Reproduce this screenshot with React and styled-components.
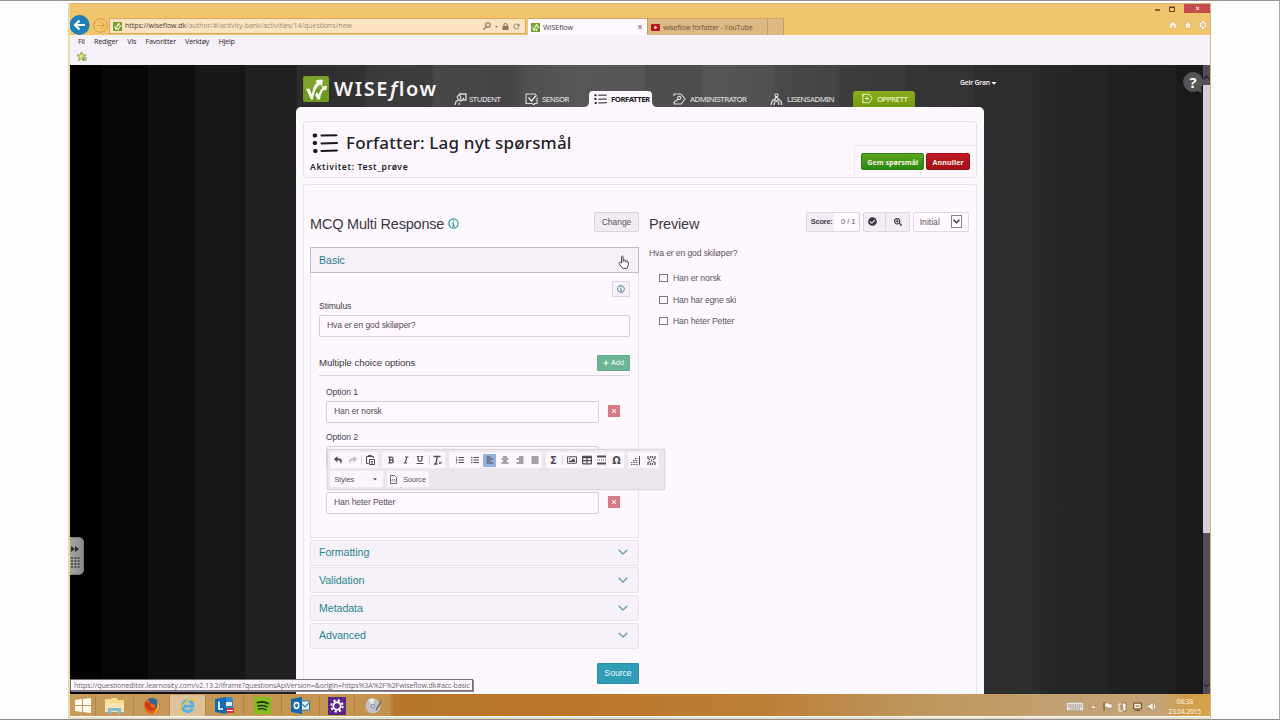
import React from 'react'
import styled, { createGlobalStyle, css } from 'styled-components'
import {
  FaAlignCenter, FaAlignJustify, FaAlignLeft, FaAlignRight, FaBold, FaCaretDown, FaCheckCircle,
  FaItalic, FaListOl, FaListUl, FaLock, FaPlus, FaRegImage, FaReply, FaSearchPlus,
  FaShare, FaTable, FaTimes, FaUnderline
} from 'react-icons/fa'
import { MdHome, MdStar, MdSettings, MdRefresh } from 'react-icons/md'

const Global = createGlobalStyle`
  *, *::before { box-sizing: border-box; }
  body { margin: 0; background: #fff; overflow: hidden; }
  svg { display: block; flex: none; }
`
const ui = '"Open Sans", "Noto Sans", sans-serif'
const arial = '"Liberation Sans", Arial, sans-serif'
const brand = '"Noto Sans", "Open Sans", sans-serif'

const Screen = styled.div`
  width: 1280px;
  height: 720px;
  padding: 2px 68px 0;
  border-top: 1px solid #99928f;
  border-bottom: 1px solid #8d8a8a;
  border-right: 1px solid #a8a8a8;
  background: #fefefe;
`
const Window = styled.div`
  width: 1143px;
  height: 716px;
  border: 1px solid #d5b67e;
  border-left: 2px solid #ead9a8;
  border-bottom: 2px solid #eadfc9;
  display: flex;
  flex-direction: column;
  font-family: ${ui};
  overflow: hidden;
`

/* browser chrome */
const TitleBar = styled.div`
  height: 31px;
  flex: none;
  background: #f1c46e;
  display: flex;
  align-items: flex-end;
`
const BackCell = styled.div`
  width: 39px;
  height: 20px;
  display: flex;
  align-items: center;
  gap: 3px;
`
const Address = styled.div`
  width: 417px;
  height: 16px;
  margin-bottom: 1px;
  padding: 0 4px 0 3px;
  background: #fce3c2;
  border: 1px solid #dba95c;
  display: flex;
  align-items: center;
  gap: 3px;
  color: #8d7460;
`
const Url = styled.div`
  flex: 1;
  font-size: 7px;
  line-height: 12px;
  letter-spacing: -0.04px;
  color: #a08c78;
  white-space: nowrap;
  b { color: #4c3c35; font-weight: 500; }
`
const Tab = styled.div`
  height: 17px;
  width: ${p => p.$w}px;
  margin-left: ${p => p.$ml || 0}px;
  padding: 0 4px 0 3px;
  border-right: 1px solid #c39c63;
  border-top: 1px solid #d4aa66;
  background: ${p => (p.$active ? '#fff9ff' : '#dcb982')};
  display: flex;
  align-items: center;
  gap: 3px;
  font-size: 7.2px;
  letter-spacing: ${p => (p.$active ? -0.1 : -0.18)}px;
  color: ${p => (p.$active ? '#453944' : '#6c5338')};
  white-space: nowrap;
  span { flex: 1; }
`
const WindowTools = styled.div`
  flex: 1;
  height: 31px;
  display: flex;
  flex-direction: column;
  align-items: flex-end;
`
const Controls = styled.div`
  display: flex;
  align-items: center;
  height: 9px;
  gap: 9px;
`
const Close = styled.div`
  width: 26px;
  height: 9px;
  display: flex;
  align-items: center;
  justify-content: center;
  background: #c64b4c;
  color: #fbe3dc;
`
const Shortcuts = styled.div`
  display: flex;
  gap: 5px;
  padding: 7px 2px 0 0;
  color: #fff4e0;
  svg { filter: drop-shadow(0 0 0.6px #755427); }
`
const MenuBar = styled.div`
  height: 15px;
  flex: none;
  padding: 0 9px 4px 8px;
  background: #f6f0f9;
  display: flex;
  align-items: center;
  gap: 9.2px;
  font-size: 7.2px;
  letter-spacing: -0.2px;
  color: #30262f;
`
const Favourites = styled.div`
  height: 15px;
  flex: none;
  padding: 1px 6px;
  background: #f6f0f9;
  color: #8fad42;
`

/* page */
const Viewport = styled.div`
  position: relative;
  height: 629px;
  flex: none;
  display: flex;
  background: linear-gradient(90deg,
    #010101 31px, #070707 31px, #070707 78px, #0f0f0f 78px, #0f0f0f 125px, #171717 125px,
    #171717 175px, #202020 175px, #202020 226px, #2e2d2e 228px, #323132 295px, #3b3a3b 296px,
    #3e3d3e 362px, #484748 364px, #464546 440px, #515051 457px, #585758 510px, #565556 575px, #4f4e4f 576px,
    #4f4e4f 632px, #575657 634px, #525152 704px, #4a494a 706px, #454445 769px, #3d3c3d 770px, #3b3a3b 835px,
    #363536 836px, #333233 904px, #2e2d2e 905px, #2d2c2d 970px, #272627 971px, #262526 1037px,
    #222122 1038px, #212021 1105px, #1b1a1b 1106px);
`
const Site = styled.div`
  width: 688px;
  margin-left: 226px;
  display: flex;
  flex-direction: column;
`
const SiteHeader = styled.header`
  height: 42px;
  flex: none;
  display: flex;
  align-items: flex-end;
  padding-left: 7px;
`
const Logo = styled.div`
  width: 151px;
  height: 31px;
  display: flex;
  align-items: flex-start;
  gap: 5px;
  font-family: ${brand};
  font-size: 20px;
  font-weight: 600;
  line-height: 26px;
  letter-spacing: 1.6px;
  color: #f7f3f8;
  i { margin-left: 1px; }
`
const Nav = styled.nav`
  display: grid;
  grid-template-columns: 71px 60px 88px 97px 83px 62px;
`
const NavItem = styled.div`
  height: 16px;
  padding-bottom: 1px;
  display: flex;
  align-items: center;
  gap: ${p => p.$gap || 4}px;
  font-family: ${brand};
  font-size: 7.8px;
  font-weight: 500;
  letter-spacing: -0.5px;
  color: #dcdadc;
  white-space: nowrap;
  ${p => p.$active && css`
    width: 71px;
    padding-left: 9px;
    font-weight: 700;
    color: #1d171f;
    background: #fdf7fe;
    clip-path: path('M0 16 Q4 15 4 11 V4 Q4 0 8 0 H63 Q67 0 67 4 V11 Q67 15 71 16 Z');
  `}
  ${p => p.$create && css`
    padding-left: 9px;
    border-radius: 3px 3px 0 0;
    color: #eaf2cf;
    background: linear-gradient(#8bad1c, #739a0c);
  `}
`
const User = styled.div`
  position: absolute;
  top: 12px;
  left: 890px;
  display: flex;
  align-items: center;
  font-family: ${brand};
  font-size: 6.8px;
  font-weight: 600;
  line-height: 12px;
  letter-spacing: -0.2px;
  color: #f2eef3;
`
const Help = styled.div`
  position: absolute;
  top: 6px;
  right: 6px;
`
const Handle = styled.div`
  position: absolute;
  left: 0;
  top: 472px;
  width: 14px;
  height: 38px;
  border-radius: 0 5px 5px 0;
  background: linear-gradient(90deg, #a6a6a6, #8c8c8c);
  border: 1px solid #777;
  border-left: 0;
`
const Scrollbar = styled.div`
  width: 7px;
  margin-left: auto;
  padding: 11px 0 7px;
  background: #554b5b;
  display: flex;
  flex-direction: column;
`
const Up = styled.span`
  transform: rotate(180deg);
  height: 4px;
`
const Thumb = styled.div`
  height: 448px;
  margin: 5px 0 auto;
  background: #d6cdda;
`
const Page = styled.main`
  flex: 1;
  padding: 14px 7px 0;
  display: flex;
  flex-direction: column;
  gap: 6px;
  border-radius: 5px 5px 0 0;
  background: #fdf8fe;
  overflow: hidden;
`
const Heading = styled.section`
  height: 57px;
  flex: none;
  border: 1px solid #e8e1eb;
  border-radius: 3px;
  background: #fdf7fd;
  display: flex;
  justify-content: space-between;
  align-items: flex-end;
`
const Titles = styled.div`
  align-self: flex-start;
  padding: 9px 0 0 6px;
  font-family: ${brand};
  color: #241e28;
`
const PageTitle = styled.h1`
  margin: 0;
  display: flex;
  align-items: center;
  gap: 6px;
  font-size: 17px;
  font-weight: 500;
  line-height: 24px;
  letter-spacing: 0.18px;
`
const Activity = styled.div`
  font-size: 8.6px;
  font-weight: 600;
  line-height: 14px;
  letter-spacing: 0.64px;
  margin-top: 5px;
`
const Actions = styled.div`
  width: 122px;
  height: 32px;
  padding: 7px 6px;
  display: flex;
  gap: 2px;
  border-top: 1px solid #ebe4ec;
  border-left: 1px solid #f0e9f1;
`
const ActionButton = styled.button`
  height: 17px;
  width: ${p => p.$w}px;
  padding: 0;
  border: 1px solid ${p => (p.$danger ? '#97111a' : '#2f7d12')};
  border-radius: 2px;
  background: ${p => (p.$danger ? 'linear-gradient(#bd1a25, #a90e17)' : 'linear-gradient(#5da51c, #298a10)')};
  color: #f6efe2;
  font: 700 7.1px/12px ${brand};
  letter-spacing: ${p => (p.$danger ? 0.1 : 0.02)}px;
  white-space: nowrap;
`
const Editor = styled.section`
  flex: 1;
  min-height: 0;
  padding: 26px 7px 0 6px;
  border: 1px solid #ebe4ee;
  border-bottom: 0;
  border-radius: 3px 3px 0 0;
  background: #fdf7fe;
  display: grid;
  grid-template-columns: 329px 320px;
  gap: 10px;
  font-family: ${arial};
  color: #463f49;
`
const Column = styled.div`
  position: relative;
`
const Row = styled.div`
  display: flex;
  align-items: center;
  justify-content: space-between;
  height: ${p => p.$h}px;
`
const SectionTitle = styled.h2`
  margin: 0;
  display: flex;
  align-items: center;
  gap: 4px;
  font-size: 14.5px;
  font-weight: 400;
  letter-spacing: -0.2px;
  line-height: 24px;
  padding-top: 4px;
  color: #3f3842;
`
const GreyButton = styled.button`
  height: 20px;
  width: ${p => p.$w}px;
  padding: 0;
  border: 1px solid #dbd4dd;
  border-radius: 2px;
  background: #f1ebf3;
  color: #5c5560;
  font: 8.6px/16px ${arial};
  letter-spacing: -0.1px;
  display: flex;
  align-items: center;
  justify-content: center;
`
const Bar = styled.div`
  height: 26px;
  margin-top: ${p => (p.$open ? 15 : 1.7)}px;
  padding: 0 10px 1px 8px;
  display: flex;
  align-items: center;
  justify-content: space-between;
  border: 1px solid ${p => (p.$open ? '#c3bcc8' : '#e9e2ed')};
  border-radius: ${p => (p.$open ? 0 : 2)}px;
  background: #f6f0f9;
  color: ${p => (p.$open ? '#2a7890' : '#27868f')};
  font-size: 10.6px;
  letter-spacing: -0.04px;
`
const Body = styled.div`
  height: 265px;
  padding: 8px 8px 0;
  border: 1px solid #e9e2ed;
  border-top: 0;
`
const SmallInfo = styled.div`
  width: 18px;
  height: 16px;
  margin: 0 0 2px auto;
  display: flex;
  align-items: center;
  justify-content: center;
  border: 1px solid #dbd5df;
  border-radius: 1px;
  background: #f6f0f8;
`
const Label = styled.div`
  font-size: 8.6px;
  line-height: 14px;
  letter-spacing: -0.08px;
  color: #463f49;
  visibility: ${p => (p.$covered ? 'hidden' : 'visible')};
`
const Input = styled.div`
  flex: 1;
  height: 22px;
  padding: 0 7px;
  border: 1px solid #d5cfda;
  border-radius: 2px;
  background: #fff9ff;
  font-size: 8.6px;
  line-height: 18px;
  letter-spacing: -0.12px;
  color: #554d58;
`
const OptionsHead = styled.div`
  height: 24px;
  margin: 14px 0 9px;
  padding-top: 3px;
  display: flex;
  justify-content: space-between;
  border-bottom: 1px solid #ddd6e0;
  font-size: 9.6px;
  line-height: 16px;
  letter-spacing: -0.03px;
  color: #3c3540;
`
const Add = styled.button`
  width: 33px;
  height: 16px;
  padding: 0;
  border: 1px solid #62ab8d;
  border-radius: 1px;
  background: #6bb596;
  color: #f1fff9;
  font: 7.4px/12px ${arial};
  display: flex;
  align-items: center;
  justify-content: center;
  gap: 2px;
`
const Option = styled.div`
  height: 45.3px;
  padding: 0 9px 0 7px;
`
const OptionLine = styled.div`
  display: flex;
  align-items: center;
  gap: 9px;
  margin-top: 2px;
  padding-right: 1px;
`
const Remove = styled.div`
  width: 12px;
  height: 12px;
  margin-top: -2px;
  display: flex;
  align-items: center;
  justify-content: center;
  background: #d67c87;
  color: #fff3f5;
`
const SourceButton = styled.button`
  display: block;
  width: 42px;
  height: 21px;
  margin: 14px 0 0 auto;
  padding: 0;
  border: 1px solid #2a8ea6;
  border-radius: 1px;
  background: #2f9db5;
  color: #ecfbff;
  font: 8.8px/17px ${arial};
  letter-spacing: -0.1px;
`

/* preview */
const Tools = styled.div`
  display: flex;
  gap: 3px;
`
const Group = styled.div`
  height: 20px;
  width: ${p => p.$w}px;
  padding-right: ${p => p.$pr || 0}px;
  display: flex;
  align-items: center;
  justify-content: space-around;
  border: 1px solid #ded7e1;
  border-radius: 2px;
  background: ${p => (p.$plain ? '#fff9ff' : '#f3edf6')};
  font-size: ${p => p.$size || 7.6}px;
  color: #5c5560;
  b { letter-spacing: -0.3px; padding-left: 3px; color: #443d47; }
  svg { color: #3c3540; }
`
const Points = styled.span`
  align-self: stretch;
  padding: 0 3px 0 7px;
  line-height: 18px;
  letter-spacing: -0.1px;
  background: #fff9ff;
`
const Rule = styled.span`
  width: 1px;
  height: ${p => p.$h || 18}px;
  background: #ddd6e0;
`
const DropArrow = styled.span`
  width: 11px;
  height: 13px;
  display: flex;
  align-items: center;
  justify-content: center;
  border: 1px solid #8a838d;
`
const Question = styled.div`
  margin: 14px 0 7px;
  font-size: 8.6px;
  line-height: 14px;
  letter-spacing: -0.12px;
  color: #5c5560;
`
const Choice = styled.div`
  height: 21.7px;
  padding-left: 10px;
  display: flex;
  align-items: center;
  gap: 5px;
  font-size: 8.6px;
  letter-spacing: -0.12px;
  color: #5c5560;
  &::before {
    content: '';
    width: 9px;
    height: 8px;
    border: 1px solid #7d7680;
  }
`

/* floating rich text toolbar */
const Floating = styled.div`
  position: absolute;
  left: 17px;
  top: 238px;
  width: 338px;
  height: 41px;
  padding: 2px 2px;
  border: 1px solid #ddd6e0;
  background: #ece6ee;
  box-shadow: 0 0 1px #cfc8d2;
`
const ToolRow = styled.div`
  display: flex;
  gap: 4px;
  height: 16px;
  margin-bottom: 3px;
`
const ToolGroup = styled.div`
  width: ${p => p.$w}px;
  padding-left: ${p => p.$pl || 0}px;
  display: flex;
  align-items: center;
  justify-content: space-around;
  border-radius: 1px;
  background: #fbf5fc;
  font-size: 7.2px;
  color: #544d57;
`
const Tool = styled.span`
  width: 13px;
  height: 13px;
  display: flex;
  align-items: center;
  justify-content: center;
  font: 700 10px/13px "DejaVu Sans", sans-serif;
  opacity: ${p => (p.$off ? 0.35 : 1)};
  background: ${p => (p.$on ? '#8fb2de' : 'transparent')};
`
const Pointer = styled.div`
  position: absolute;
  left: 308px;
  top: 44px;
`
const Status = styled.div`
  position: absolute;
  left: 0;
  bottom: 3px;
  height: 12px;
  width: 403px;
  padding-left: 3px;
  border: 1px solid #77707a;
  box-shadow: 1px 1px 0 #8b8490;
  background: #fdf8fe;
  font-size: 7.1px;
  line-height: 10px;
  letter-spacing: -0.11px;
  color: #6c646e;
  white-space: nowrap;
`

/* taskbar */
const Taskbar = styled.div`
  height: 22px;
  flex: none;
  display: flex;
  align-items: center;
  justify-content: space-between;
  background: linear-gradient(90deg, #c69b5c 0, #c2934d 320px, #b6772a 322px, #bb762a 500px, #bd7f37 700px, #bf965d 850px, #c2a171 1000px, #c4a376 1090px, #cf9e4a 1115px, #d6a34b);
`
const Apps = styled.div`
  height: 22px;
  padding-top: 1px;
  display: grid;
  grid-template-columns: 26px 38px 36px 36px 38px 38px 38px 35px 38px;
`
const AppCell = styled.div`
  display: flex;
  align-items: center;
  justify-content: center;
  border-right: 1px solid #b5853f;
  background: ${p => (p.$current ? '#dfc29a' : 'transparent')};
`
const Tray = styled.div`
  display: flex;
  align-items: center;
  gap: 6px;
  padding: 3px 9px 0 0;
  color: #fff8ee;
`
const Clock = styled.div`
  margin-left: 6px;
  font-size: 6.8px;
  line-height: 10px;
  letter-spacing: -0.2px;
  text-align: center;
`

const Leaf = ({ size }) => (
  <svg width={size} height={size} viewBox="0 0 26 26">
    <rect width="26" height="26" rx="2" fill="#6f9a22" />
    <rect x="1" y="1" width="24" height="12" fill="#84aa35" opacity=".6" />
    <path d="M3 13l3.500-.5 2.500 6C10 11 12 8 14 6.500l-2-1.500q5-2.500 8-1l-1 6-2-1.500c-4 3-6 8-7 15H8z" fill="#f8fcef" />
    <path d="M12 19l2-3 1.500 2.500C17 15 18 13 19.500 12l-1-1.200q3-1.300 5.500-.6l-1 4.300-1.500-1c-3 2-4 6-4.500 10h-2.500z" fill="#f8fcef" />
  </svg>
)
const Back = () => (
  <svg width="20" height="20" viewBox="0 0 20 20">
    <circle cx="9.6" cy="10" r="10" fill="#1f7fb8" />
    <path d="M15 10H5m4.5-4.5L5 10l4.500 4.500" stroke="#fff" strokeWidth="2.200" fill="none" />
  </svg>
)
const Forward = () => (
  <svg width="15" height="15" viewBox="0 0 15 15" fill="none" stroke="#dd9c3c">
    <circle cx="7.500" cy="7.500" r="6.800" />
    <path d="M3.500 7.500h8M8 4l3.500 3.500L8 11" strokeWidth=".9" />
  </svg>
)
const Line = ({ children, w = 13, h = 12, box = '0 0 13 12', sw = 1.1 }) => (
  <svg width={w} height={h} viewBox={box} fill="none" stroke="currentColor" strokeWidth={sw}>{children}</svg>
)
const Lens = () => (
  <Line w={8} h={8} box="0 0 8 8"><circle cx="5" cy="3" r="2.300" /><path d="M3.200 4.800L.5 7.500" strokeWidth="1.300" /></Line>
)
const StudentIcon = () => (
  <Line>
    <path d="M5.500 2V1H12v6H7.500" strokeWidth="1.300" /><circle cx="5" cy="4.500" r="1.900" />
    <path d="M1 12l1-3.500 3-1.500 2 1 3-3M5 12l.5-2.500" strokeWidth="1.300" />
  </Line>
)
const SensorIcon = () => (
  <Line><path d="M12 4.500v6H9.500L9 12l-2-1.500H1V1h10" /><path d="M3.500 4.500l3 3.500 5-6" strokeWidth="1.500" /></Line>
)
const BulletIcon = ({ w, h }) => (
  <svg width={w} height={h} viewBox="0 0 26 20" fill="none" stroke="#1d171f" strokeLinecap="round">
    <path d="M9.500 2.500l15-.3M9.500 10.500l15.500-.5M9.500 18l15.500-.6" strokeWidth="2" />
    <path d="M2.500 2.500h.8M2.500 10h.8M3 18h.8" strokeWidth="3.800" />
  </svg>
)
const AdminIcon = () => (
  <Line><path d="M1 3V1h7l4 5-4 5H1V9" /><path d="M1 9.500l4-3.500" /><circle cx="6.200" cy="5" r="1.600" /></Line>
)
const LicenseIcon = () => (
  <Line><circle cx="6.500" cy="2.300" r="1.600" /><path d="M1 12l1.200-4 2-1.500 2.300 1.800L8.800 6.500l2 1.500L12 12M4 12l.8-3.500M9 12l-.8-3.500M4.200 6.500L6.500 4l2.300 2.500" strokeWidth="1.300" /></Line>
)
const CreateIcon = () => (
  <Line w={11} h={11}><path d="M1 3.500V1h7.500L12 6l-3.500 5H1V8.500M1 1v10M3.500 6h5M6 3.500v5" /></Line>
)
const HelpBubble = () => (
  <svg width="22" height="23" viewBox="0 0 22 23">
    <path d="M11 1a10 10 0 1 0 4.500 19l4.500 2-1-5A10 10 0 0 0 11 1z" fill="#555355" />
    <text x="11" y="16.500" textAnchor="middle" fill="#fff" fontFamily="Open Sans, sans-serif" fontWeight="700" fontSize="15">?</text>
  </svg>
)
const Info = ({ size = 11, color = '#3b9a9a' }) => (
  <svg width={size} height={size} viewBox="0 0 11 11" fill="none" stroke={color}>
    <circle cx="5.500" cy="5.500" r="4.700" strokeWidth="1.200" />
    <path d="M5.500 2.300v1.300M4.300 5h1.200v3.200M4.200 8.200h2.700" strokeWidth="1.200" />
  </svg>
)
const Chevron = ({ w = 10, sw = 1.3, color = '#6aa0aa' }) => (
  <svg width={w} height={w / 2 + 1} viewBox="0 0 10 6" fill="none" stroke={color} strokeWidth={sw}><path d="M.7.8L5 5 9.300.8" /></svg>
)
const Hand = () => (
  <svg width="11" height="14" viewBox="0 0 11 14">
    <path d="M3.500 8V1.500Q4.300.2 5.100 1.500V5.500L5.500 4.800 7 5.300 7.400 5.300 8.700 6 9.200 6 10.300 7V10L9 13.300H4.500L1 8.500 1.500 7.400z" fill="#fff" stroke="#3c3540" strokeWidth=".9" />
    <path d="M5.300 5v2.500M7.200 5.500v2.200M9 6v2" stroke="#3c3540" strokeWidth=".6" />
  </svg>
)
const Firefox = () => (
  <svg width="18" height="18" viewBox="0 0 18 18">
    <circle cx="9" cy="9" r="8" fill="#e4641d" />
    <path d="M5 2a8 8 0 0 1 11 4q1 5-3 8 1-6-3-7-2 0-3-2z" fill="#266aa8" />
    <path d="M2 4l3 2 4-1-2 3 2 3 4-1q-1 4-5 4-5-1-6-6z" fill="#c63d18" />
    <path d="M14 3q4 5 1 10-2 3-5 4 6-5 4-14z" fill="#f5b82e" />
  </svg>
)
const Explorer = () => (
  <svg width="19" height="18" viewBox="0 0 18 18" fill="none">
    <path d="M4 9.300h10.500Q14.500 4 9.300 4T4 9.500q.5 5 5.300 5 3.200 0 4.700-2.500" stroke="#50b4e8" strokeWidth="3" />
    <path d="M4 15q-4 3-2.500-1.500Q4 6.500 11 3q7-3.500 5 2" stroke="#e9c34c" strokeWidth="1.500" />
  </svg>
)
const Folder = () => (
  <svg width="19" height="17" viewBox="0 0 19 17">
    <path d="M0 2h6l1-1h5l1 2h6v12H0z" fill="#f2dc8e" />
    <path d="M0 6h19v9H0z" fill="#f6e6ae" />
    <path d="M3 17v-6h13v6h-3v-3H6v3z" fill="#7dbbd9" />
  </svg>
)
const Lync = () => (
  <svg width="19" height="17" viewBox="0 0 19 17">
    <path d="M10 4a4 4 0 1 1 8 0v7h-8z" fill="#2d85c7" /><path d="M11 5h6v4h-6z" fill="#e7eef8" />
    <path d="M0 2l11-2v17L0 15z" fill="#1269b0" />
    <path d="M4 4.500V12h4" stroke="#fff" strokeWidth="1.700" fill="none" />
    <path d="M11 11h8v5h-8z" fill="#c7323f" /><path d="M12 13.500h6" stroke="#fff" />
  </svg>
)
const Spotify = () => (
  <svg width="17" height="17" viewBox="0 0 17 17" fill="none" stroke="#1d2b0d" strokeLinecap="round">
    <rect width="17" height="17" fill="#83bd1d" stroke="none" />
    <path d="M3.500 5.500q6-1.700 10.500 1" strokeWidth="1.800" /><path d="M4 9q5-1.200 9 .8" strokeWidth="1.500" /><path d="M4.500 12q4-1 7.500.8" strokeWidth="1.300" />
  </svg>
)
const Outlook = () => (
  <svg width="19" height="17" viewBox="0 0 19 17" fill="none">
    <path d="M9 4h9.500v9H9z" fill="#edf4fb" stroke="#2378b7" /><path d="M10 6l4 4 5-5" stroke="#2378b7" strokeWidth="1.200" />
    <path d="M0 2l11-2v17L0 15z" fill="#1269b0" /><ellipse cx="5.500" cy="8.500" rx="2.200" ry="2.900" stroke="#fff" strokeWidth="1.600" />
  </svg>
)
const Gear = () => (
  <svg width="18" height="18" viewBox="0 0 18 18" fill="none" stroke="#fff">
    <rect width="18" height="18" fill="#5b2587" stroke="none" />
    <circle cx="9" cy="9" r="3.700" strokeWidth="1.900" /><circle cx="9" cy="9" r="5.700" strokeWidth="2" strokeDasharray="2.240 2.240" />
  </svg>
)
const Disc = () => (
  <svg width="18" height="16" viewBox="0 0 18 16">
    <circle cx="8" cy="8" r="7.500" fill="#c3c1c5" /><path d="M8 8L3 2a7.500 7.500 0 0 1 6-1.500z" fill="#ecebee" />
    <circle cx="8" cy="8" r="2.300" fill="#8c98a9" /><circle cx="8" cy="8" r="1" fill="#eee" />
    <path d="M16.500 3L11 12" stroke="#77706f" strokeWidth="1.500" />
  </svg>
)
const Windows = () => (
  <svg width="16" height="15" viewBox="0 0 16 15" fill="#fffaf0"><path d="M0 2l7-1v6H0zM8 1l8-1v7H8zM0 8h7v6l-7-1zM8 8h8v7l-8-1z" /></svg>
)
const Paste = () => (
  <Line w={9} h={10} box="0 0 9 10" sw={1}>
    <path d="M2.500 8.500h-2v-7h7v1.500M2.500 1.500V.5h3v1" /><path d="M3.500 4.500h5v5h-5zM5 6.500h2M5 8h2" />
  </Line>
)
const ClearFormat = () => (
  <Line w={11} h={10} box="0 0 11 10" sw={1.4}><path d="M1.500 1.500h7M5.200 1.500L4 9M2 9h3.500" /><path d="M7 6.500L9.500 9M9.500 6.500L7 9" strokeWidth="1" /></Line>
)

const options = ['Han er norsk', 'Han har egne ski', 'Han heter Petter']

const ToolbarOverlay = () => (
  <Floating>
    <ToolRow>
      <ToolGroup $w={48}>
        <Tool><FaReply size={8} /></Tool><Tool $off><FaShare size={8} /></Tool><Rule $h={10} /><Tool><Paste /></Tool>
      </ToolGroup>
      <ToolGroup $w={63} $pl={2}>
        <Tool><FaBold size={8} /></Tool><Tool><FaItalic size={8} /></Tool><Tool><FaUnderline size={8} /></Tool><Rule $h={10} />
        <Tool><ClearFormat /></Tool>
      </ToolGroup>
      <ToolGroup $w={93} $pl={3}>
        <Tool><FaListOl size={8} /></Tool><Tool><FaListUl size={8} /></Tool>
        <Tool $on><FaAlignLeft size={8} /></Tool><Tool><FaAlignCenter size={8} /></Tool>
        <Tool><FaAlignRight size={8} /></Tool><Tool><FaAlignJustify size={8} /></Tool>
      </ToolGroup>
      <ToolGroup $w={78}>
        <Tool>Σ</Tool><Rule $h={10} /><Tool><FaRegImage size={10} /></Tool><Tool><FaTable size={10} /></Tool>
        <Tool><Line w={9} h={10} box="0 0 9 10" sw={2}><path d="M0 1.500h9M0 8.500h9" /><path d="M0 5h9" strokeWidth="1" strokeDasharray="1 1" /></Line></Tool>
        <Tool>Ω</Tool>
      </ToolGroup>
      <ToolGroup $w={31}>
        <Tool><Line w={9} h={9} box="0 0 9 9" sw={1}><path d="M0 8.500h7M0 6.500h7M2 4.500h5M4 2.500h3" strokeDasharray="1 .6" /><path d="M8.500 0v9" /></Line></Tool>
        <Tool><Line w={9} h={9} box="0 0 9 9" sw={1.2}><path d="M1 0v2.500l2 1M8 0v2.500L6 3.500M1 9V6.500l2-1M8 9V6.500L6 5.500M3.500 0v2M5.500 0v2M3.500 9V7M5.500 9V7M4.500 3.500v2" /></Line></Tool>
      </ToolGroup>
    </ToolRow>
    <ToolRow>
      <ToolGroup $w={53}><span>Styles</span><span /><FaCaretDown size={6} /></ToolGroup>
      <ToolGroup $w={42}>
        <Line w={7} h={9} box="0 0 7 9" sw={0.8}><path d="M.5.5h4l2 2v6h-6zM2.800 4L1.800 5.200l1 1.200M4.200 4l1 1.200-1 1.200" /></Line>
        <span>Source</span>
      </ToolGroup>
    </ToolRow>
  </Floating>
)

const QuestionForm = () => (
  <Column>
    <Row $h={21}>
      <SectionTitle>MCQ Multi Response <Info /></SectionTitle>
      <GreyButton $w={45}>Change</GreyButton>
    </Row>
    <Bar $open>Basic</Bar>
    <Body>
      <SmallInfo><Info size={8} color="#4d7f90" /></SmallInfo>
      <Label>Stimulus</Label>
      <Row $h={25}><Input>Hva er en god skiløper?</Input></Row>
      <OptionsHead>Multiple choice options <Add><FaPlus size={6} />Add</Add></OptionsHead>
      {options.map((text, i) => (
        <Option key={text}>
          {/* the last label sits behind the floating toolbar */}
          <Label $covered={i === 2}>Option {i + 1}</Label>
          <OptionLine><Input>{text}</Input><Remove><FaTimes size={6} /></Remove></OptionLine>
        </Option>
      ))}
    </Body>
    {['Formatting', 'Validation', 'Metadata', 'Advanced'].map(name => (
      <Bar key={name}>{name}<Chevron /></Bar>
    ))}
    <SourceButton>Source</SourceButton>
    <ToolbarOverlay />
    <Pointer><Hand /></Pointer>
  </Column>
)

const Preview = () => (
  <Column>
    <Row $h={21}>
      <SectionTitle>Preview</SectionTitle>
      <Tools>
        <Group $w={54}><b>Score:</b><Points>0 / 1</Points></Group>
        <Group $w={47} $pr={3}><FaCheckCircle size={9} /><Rule /><FaSearchPlus size={8} /></Group>
        <Group $w={56} $plain $size={8.6}>Initial<DropArrow><Chevron w={7} sw={2} color="#3c3540" /></DropArrow></Group>
      </Tools>
    </Row>
    <Question>Hva er en god skiløper?</Question>
    {options.map(text => <Choice key={text}>{text}</Choice>)}
  </Column>
)

const Browser = () => (
  <>
    <TitleBar>
      <BackCell><Back /><Forward /></BackCell>
      <Address>
        <Leaf size={9} />
        <Url><b>https://wiseflow.dk</b>/author/#/activity-bank/activities/14/questions/new</Url>
        <Lens /><FaCaretDown size={5} /><FaLock size={7} /><MdRefresh size={9} />
      </Address>
      <Tab $w={120} $ml={2} $active><Leaf size={9} /><span>WISEflow</span><FaTimes size={6} color="#8b828b" /></Tab>
      <Tab $w={120}>
        <svg width="9" height="7" viewBox="0 0 9 7"><rect width="9" height="7" rx="1" fill="#b8161b" /><path d="M3.500 1.800v3.400l3-1.700z" fill="#fff" /></svg>
        <span>wiseflow forfatter - YouTube</span>
      </Tab>
      <Tab $w={16} />
      <WindowTools>
        <Controls>
          <svg width="5" height="5" viewBox="0 0 5 5"><path d="M0 4h5" stroke="#5c4420" strokeWidth="1.500" /></svg>
          <svg width="6" height="6" viewBox="0 0 6 6" fill="none" stroke="#5c4420"><path d="M.5 1.500h5v4h-5zM0 1h6" /></svg>
          <Close><FaTimes size={5} /></Close>
        </Controls>
        <Shortcuts><MdHome size={10} /><MdStar size={10} /><MdSettings size={10} /></Shortcuts>
      </WindowTools>
    </TitleBar>
    <MenuBar>
      <span>Fil</span><span>Rediger</span><span>Vis</span><span>Favoritter</span><span>Verktøy</span><span>Hjelp</span>
    </MenuBar>
    <Favourites>
      <svg width="11" height="11" viewBox="0 0 11 11"><path d="M5.500.8l1.300 3 3.300.3-2.500 2.200.8 3.200-2.900-1.700-2.900 1.700.8-3.200L.9 4.100l3.300-.3z" fill="#dfe39b" stroke="#8aa43c" /><path d="M6 7h5M6 9h5" stroke="#6e9a32" /></svg>
    </Favourites>
  </>
)

const SiteNav = () => (
  <Nav>
    <NavItem $gap={2}><StudentIcon />STUDENT</NavItem>
    <NavItem><SensorIcon />SENSOR</NavItem>
    <NavItem $active><BulletIcon w={13} h={10} />FORFATTER</NavItem>
    <NavItem><AdminIcon />ADMINISTRATOR</NavItem>
    <NavItem><LicenseIcon />LISENSADMIN</NavItem>
    <NavItem $create><CreateIcon />OPPRETT</NavItem>
  </Nav>
)

const TaskbarView = () => (
  <Taskbar>
    <Apps>
      {[Windows, Folder, Firefox, Explorer, Lync, Spotify, Outlook, Gear, Disc].map((Icon, i) => (
        <AppCell key={i} $current={i === 3}><Icon /></AppCell>
      ))}
    </Apps>
    <Tray>
      <svg width="18" height="9" viewBox="0 0 18 9"><rect width="18" height="9" fill="#e9e3df" stroke="#8b7a66" /><path d="M2 3h14M2 5h14M4 7h10" stroke="#8b8078" strokeDasharray="1.500 .7" /></svg>
      <svg width="7" height="4" viewBox="0 0 7 4"><path d="M1.500 3l2-2 2 2z" fill="#fff8ee" /></svg>
      <svg width="9" height="9" viewBox="0 0 9 9"><path d="M1 0v9" stroke="#6c5a45" /><path d="M2 1h3l1 1h3v4H5L4 5H2z" fill="#fff8ee" stroke="#8b7a66" strokeWidth=".5" /></svg>
      <svg width="9" height="10" viewBox="0 0 9 10"><path d="M1 2h4v7H1z" fill="none" stroke="#fff8ee" /><path d="M4 1h4v8H5z" fill="#fff8ee" stroke="#6c5a45" strokeWidth=".7" /></svg>
      <svg width="9" height="9" viewBox="0 0 9 9" fill="none" stroke="#fff8ee"><path d="M.5 1h8v6h-8zM2 8.500h5" stroke="#6c5a45" /><path d="M2 2.500h5v3H2z" /></svg>
      <svg width="8" height="9" viewBox="0 0 8 9"><path d="M0 3h2l3-3v9L2 6H0z" fill="#fff8ee" stroke="#8b7a66" strokeWidth=".5" /><path d="M6.500 2.500v4" stroke="#fff8ee" /></svg>
      <Clock>08:38<br />23.04.2015</Clock>
    </Tray>
  </Taskbar>
)

const App = () => {
  return (
    <Screen>
      <Global />
      <Window>
        <Browser />
        <Viewport>
          <Site>
            <SiteHeader>
              <Logo><Leaf size={26} /><span>WISE<i>f</i>low</span></Logo>
              <SiteNav />
            </SiteHeader>
            <Page>
              <Heading>
                <Titles>
                  <PageTitle><BulletIcon w={30} h={20} />Forfatter: Lag nyt spørsmål</PageTitle>
                  <Activity>Aktivitet: Test_prøve</Activity>
                </Titles>
                <Actions>
                  <ActionButton $w={64}>Gem spørsmål</ActionButton>
                  <ActionButton $w={44} $danger>Annuller</ActionButton>
                </Actions>
              </Heading>
              <Editor>
                <QuestionForm />
                <Preview />
              </Editor>
            </Page>
          </Site>
          <Scrollbar>
            <Up><Chevron w={7} sw={2} color="#2a252d" /></Up>
            <Thumb />
            <Chevron w={7} sw={2} color="#2a252d" />
          </Scrollbar>
          <User>Geir Gran <FaCaretDown size={8} /></User>
          <Help><HelpBubble /></Help>
          <Handle>
            <svg width="13" height="36" viewBox="0 0 13 36" fill="#303030">
              <path d="M1 8l4 3-4 3zM5 8l4 3-4 3z" />
              <path d="M1 20h9M1 23h9M1 26h9M1 29h9" stroke="#555" strokeWidth="2" strokeDasharray="2 1.300" />
            </svg>
          </Handle>
          <Status>https://questioneditor.learnosity.com/v2.13.2/iframe?questionsApiVersion=&origin=https%3A%2F%2Fwiseflow.dk#acc-basic</Status>
        </Viewport>
        <TaskbarView />
      </Window>
    </Screen>
  )
}

export default App
